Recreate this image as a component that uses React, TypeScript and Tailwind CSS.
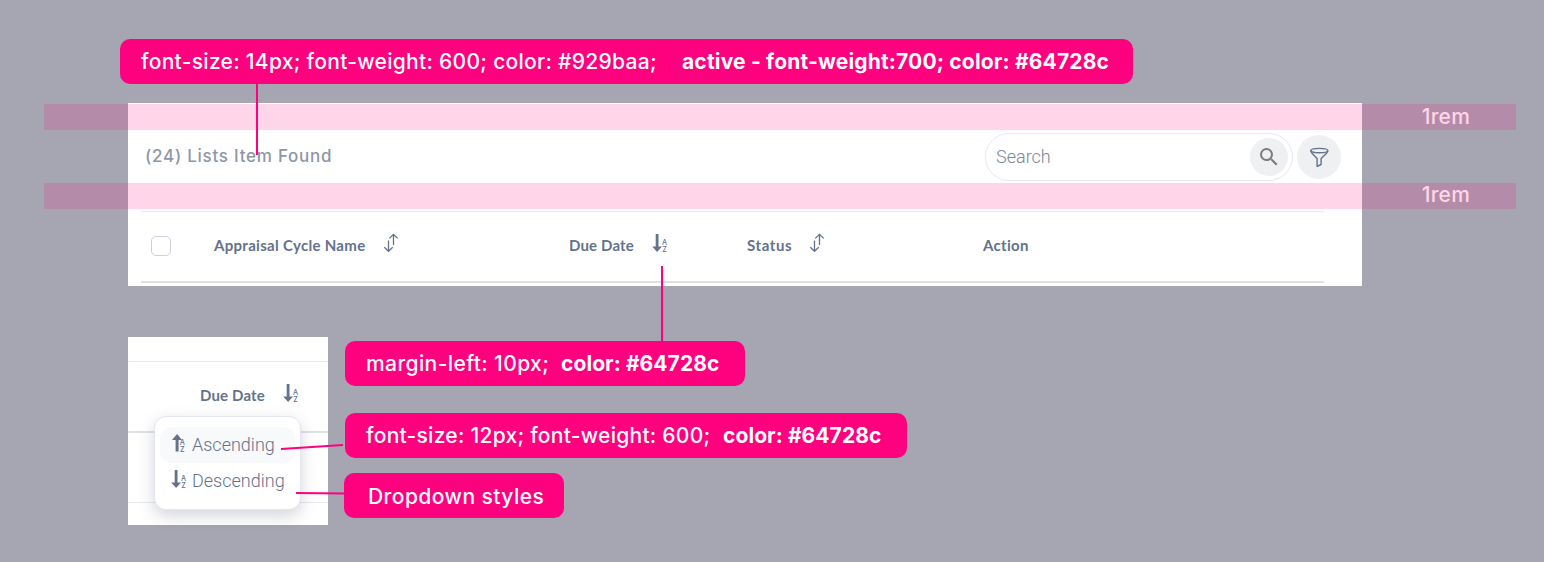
import type { ReactNode } from "react";
import { MdSearch } from "react-icons/md";

function SortBoth() {
  return (
    <svg width="16" height="20" viewBox="0 0 16 20" fill="none" stroke="#64728c" strokeWidth="1.3">
      <path d="M10.5 12V1.3M6.3 5.4l4.2-4.1 4.2 4.1" />
      <path d="M5.5 7.5v10.7M1.3 14.2l4.2 4.1 4.2-4.1" />
    </svg>
  );
}

function SortAZ({ up = false }: { up?: boolean }) {
  return (
    <svg width="18" height="20" viewBox="0 0 18 20" fill="#64728c">
      {up ? (
        <path d="M5.6 18.6V7H2L7.1 1.1 12 7H8.6v11.6z" />
      ) : (
        <path d="M4.7 1h2.8v12.4H11L6.1 19 1.2 13.4h3.5z" />
      )}
      <g fontFamily="Inter, sans-serif" fontSize="7.2" fontWeight="500">
        <text x={up ? 9.7 : 11} y="12.4">A</text>
        <text x={up ? 9.9 : 11.3} y="18.9">Z</text>
      </g>
    </svg>
  );
}

function FunnelIcon() {
  return (
    <svg width="20" height="20" viewBox="0 0 20 20" fill="none" stroke="#64728c" strokeWidth="1.4" strokeLinejoin="round">
      <ellipse cx="10.3" cy="3.6" rx="8.5" ry="2.2" />
      <path d="M1.8 3.6c0 1 .3 1.5 1 2.3l5.3 5.6v8l4-2V11.500l5.700-5.600c.7-.8 1-1.300 1-2.300" />
    </svg>
  );
}

const heading = "font-['Lato',sans-serif] text-[15px] leading-5 font-bold whitespace-nowrap text-[#64728c]";

function Callout({ place, children }: { place: string; children: ReactNode }) {
  return (
    <div
      className={`absolute flex h-[45px] items-center rounded-[10px] bg-[#ff007f] pl-[21px] text-[21px] font-medium whitespace-pre text-white ${place}`}
    >
      {children}
    </div>
  );
}

function SpacingBand({ place, label }: { place: string; label: string }) {
  return (
    <div
      className={`absolute left-[44px] flex h-[26px] w-[1472px] items-center justify-end bg-[#ff007f]/[0.165] pr-[46px] text-[21px] leading-6 font-medium tracking-[0.2px] text-[#ffd5e8] ${place}`}
    >
      {label}
    </div>
  );
}

function ListPanel() {
  return (
    <section className="h-[183px] w-[1234px] bg-white pt-[30px] pr-[21px] pl-[13px]">
      <div className="flex h-12 items-center">
        <h1 className="pb-0.5 pl-1 text-[17px] leading-6 font-medium tracking-[0.75px] whitespace-nowrap text-[#8d97a7]">
          (24) Lists Item Found
        </h1>
        <div className="ml-auto flex h-12 w-[308px] items-center justify-between rounded-full border border-[#e6e8ee] pr-1 pl-[10px]">
          <span className="font-['Roboto',sans-serif] text-lg font-light text-[#7c879b]">Search</span>
          <button className="flex size-[38px] items-center justify-center rounded-full bg-[#eff0f2]">
            <MdSearch size={24} color="#7b7b7b" />
          </button>
        </div>
        <button className="ml-1 flex size-11 items-center justify-center rounded-full bg-[#eff0f2]">
          <FunnelIcon />
        </button>
      </div>
      <div className="mt-[30px] flex h-[72px] w-[1183px] items-center border-t border-b-2 border-t-[#e6e8ee] border-b-[#dee2e6] pb-0.5 pl-[10px]">
        <span className="mr-[43px] size-5 rounded-[5px] border border-[#cdd0de]" />
        <div className={`flex w-[355px] items-center ${heading}`}>
          <span className="w-[169px] pb-0.5 tracking-[0.3px]">Appraisal Cycle Name</span>
          <span className="-mt-[5px]"><SortBoth /></span>
        </div>
        <div className={`flex w-[178px] items-center ${heading}`}>
          <span className="w-[82px] pb-0.5 tracking-[0.15px]">Due Date</span>
          <span className="-mt-[5px]"><SortAZ /></span>
        </div>
        <div className={`flex w-[236px] items-center ${heading}`}>
          <span className="w-[62px] pb-0.5 tracking-[0.6px]">Status</span>
          <span className="-mt-[5px]"><SortBoth /></span>
        </div>
        <span className={`pb-0.5 tracking-[0.3px] ${heading}`}>Action</span>
      </div>
    </section>
  );
}

function DropdownPanel() {
  return (
    <section className="relative mt-[51px] h-[188px] w-[200px] bg-white pt-6">
      <div className="flex h-[72px] items-center border-t border-b-2 border-t-[#e6e8ee] border-b-[#dee2e6] pb-0.5 pl-[72px]">
        <span className={`w-[82px] pb-0.5 tracking-[0.15px] ${heading}`}>Due Date</span>
        <span className="-mt-[5px]"><SortAZ /></span>
      </div>
      <div className="h-[70px] border-b border-[#e6e8ee]" />
      <div className="absolute top-[79px] left-[26px] h-[94px] w-[147px] rounded-xl border border-[#e4e6ef] bg-white px-[5px] pt-[10px] font-['Roboto',sans-serif] text-lg font-light text-[#64728c] shadow-[0_6px_16px_rgba(60,65,90,0.22)]">
        <div className="flex h-9 items-center gap-1 rounded-xl bg-[#f8f9fb] pl-[10px]">
          <span className="-mt-1"><SortAZ up /></span>
          <span>Ascending</span>
        </div>
        <div className="flex h-9 items-center gap-1 pl-[10px]">
          <span className="-mt-1"><SortAZ /></span>
          <span>Descending</span>
        </div>
      </div>
    </section>
  );
}

export default function App() {
  return (
    <main className="relative h-[562px] w-[1544px] overflow-hidden bg-[#a6a6b2] pt-[103px] pl-32 font-['Inter',sans-serif]">
      <ListPanel />
      <DropdownPanel />

      <SpacingBand place="top-[104px]" label="1rem" />
      <SpacingBand place="top-[183px] pb-0.5" label="1rem" />

      <svg className="absolute inset-0" width="1544" height="562" stroke="#ff007f" strokeWidth="2">
        <path d="M257 84V155M662 266V341M281 449L343 445M296 493L345 493.6" />
      </svg>

      <Callout place="top-[39px] left-[120px] w-[1013px]">
        <span className="w-[541px] tracking-[0.3px]">font-size: 14px; font-weight: 600; color: #929baa;</span>
        <b className="tracking-[0.18px]">active - font-weight:700; color: #64728c</b>
      </Callout>
      <Callout place="top-[341px] left-[345px] w-[400px]">
        <span className="w-[195px] tracking-[0.4px]">margin-left: 10px;</span>
        <b className="tracking-[0.08px]">color: #64728c</b>
      </Callout>
      <Callout place="top-[413px] left-[345px] w-[562px]">
        <span className="w-[357px] tracking-[0.27px]">font-size: 12px; font-weight: 600;</span>
        <b className="tracking-[0.08px]">color: #64728c</b>
      </Callout>
      <Callout place="top-[473px] left-[344px] w-[220px]">
        <span className="pt-0.5 pl-[3px] tracking-[0.45px]">Dropdown styles</span>
      </Callout>
    </main>
  );
}
